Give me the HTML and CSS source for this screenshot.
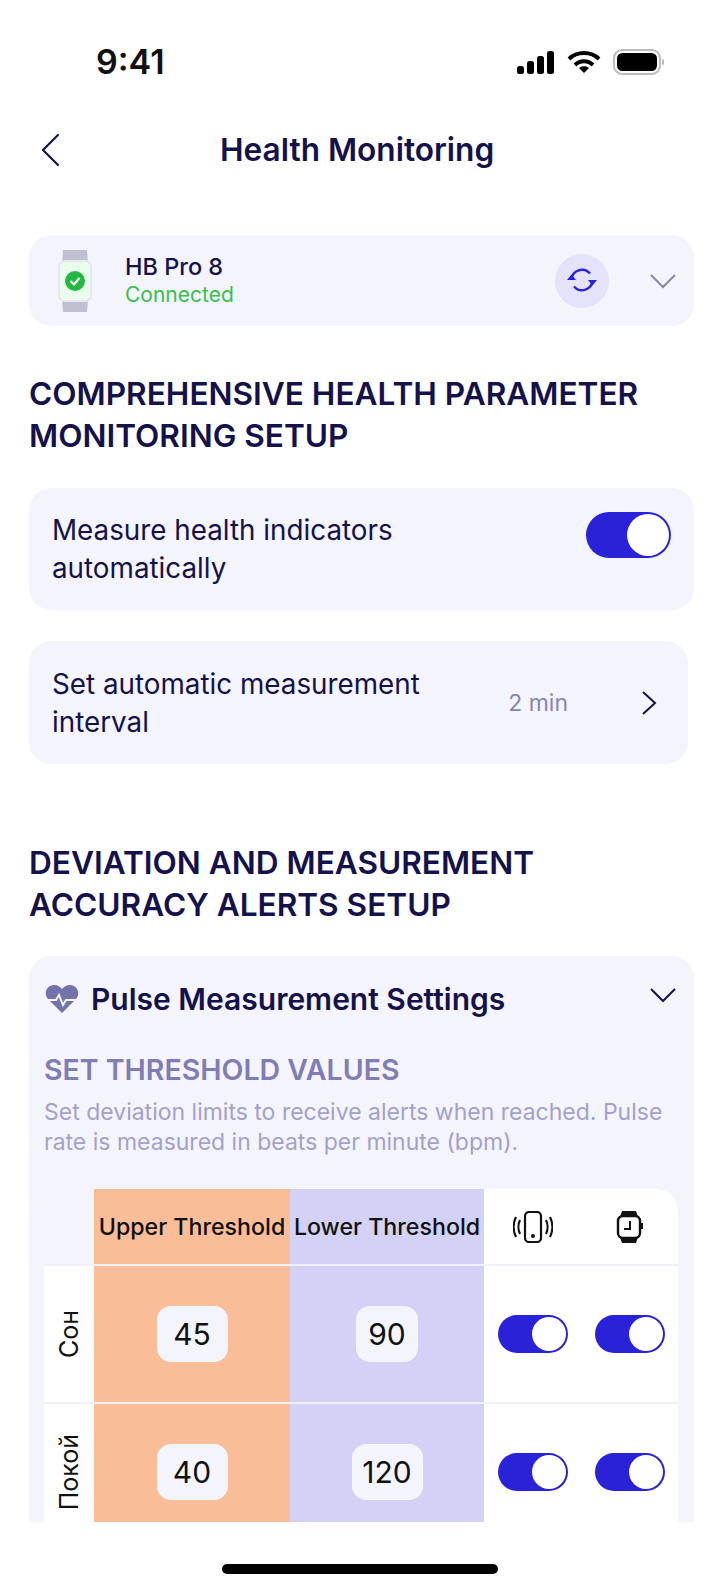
FILE: index.html
```html
<!DOCTYPE html>
<html lang="en">
<head>
<meta charset="UTF-8" />
<meta name="viewport" content="width=device-width, initial-scale=1" />
<title>Health Monitoring</title>
<link rel="stylesheet" href="styles.css">
</head>
<body>

<div class="status-bar">
  <span class="time">9:41</span>
  <div class="status-icons">
    <svg width="38" height="23" viewBox="0 0 38 23" fill="#000">
      <rect x="0" y="15" width="7" height="8" rx="2.5"/>
      <rect x="10" y="10" width="7" height="13" rx="2.5"/>
      <rect x="20" y="5" width="7" height="18" rx="2.5"/>
      <rect x="30" y="0" width="7" height="23" rx="2.5"/>
    </svg>
    <svg width="34" height="24" viewBox="0 0 34 24" fill="none" stroke="#000" stroke-width="4">
      <path d="M2 9 C10 1 24 1 32 9"/>
      <path d="M8 15 C13 10 21 10 26 15"/>
      <path d="M12 18 L17 23 L22 18 C19 15.500 15 15.500 12 18 Z" fill="#000" stroke="none"/>
    </svg>
    <svg width="52" height="26" viewBox="0 0 52 26">
      <rect x="1" y="1" width="46" height="24" rx="8" fill="none" stroke="#bdbdbd" stroke-width="2"/>
      <rect x="4" y="4" width="40" height="18" rx="5.500" fill="#000"/>
      <rect x="49" y="10" width="2" height="6" rx="1" fill="#bdbdbd"/>
    </svg>
  </div>
</div>

<div class="nav-bar">
  <svg class="back" width="20" height="34" viewBox="0 0 20 34" fill="none" stroke="#15124b" stroke-width="2.200" stroke-linecap="round" stroke-linejoin="round">
    <path d="M17 2 L2 17 L17 32"/>
  </svg>
  <h1>Health Monitoring</h1>
</div>

<div class="content">
  <div class="card device-card">
    <svg class="watch" width="34" height="62" viewBox="0 0 34 62">
      <path d="M5 0 H29 L30 14 H4 Z" fill="#c0c0d2"/>
      <path d="M4 48 H30 L29 62 H5 Z" fill="#c0c0d2"/>
      <rect x="1" y="11" width="32" height="40" rx="6" fill="#eafcec" stroke="#e6e6ee" stroke-width="2"/>
      <circle cx="17" cy="31" r="10" fill="#22b841"/>
      <path d="M12.500 31 L16 34.500 L21.500 28" fill="none" stroke="#fff" stroke-width="2.200"/>
    </svg>
    <div class="device-info">
      <div class="device-name">HB Pro 8</div>
      <div class="device-status">Connected</div>
    </div>
    <div class="sync-btn">
      <svg width="30" height="28" viewBox="0 0 30 28" fill="none" stroke="#2a22d8" stroke-width="2.400">
        <path d="M4.500 13 A10.500 10.500 0 0 1 23 6.500"/>
        <path d="M25.500 13 A10.500 10.500 0 0 1 7 19.500"/>
        <path d="M0 13 H9 L4.500 7.500 Z" fill="#2a22d8" stroke="none"/>
        <path d="M21 13 H30 L25.500 18.500 Z" fill="#2a22d8" stroke="none"/>
      </svg>
    </div>
    <svg class="chevron-down" width="28" height="16" viewBox="0 0 28 16" fill="none" stroke="#8886b0" stroke-width="2">
      <path d="M2 2 L14 14 L26 2"/>
    </svg>
  </div>

  <h2 class="section-title first">COMPREHENSIVE HEALTH PARAMETER MONITORING SETUP</h2>

  <div class="card setting-card">
    <div class="setting-label">Measure health indicators automatically</div>
    <div class="toggle big"><span></span></div>
  </div>

  <div class="card setting-card interval">
    <div class="setting-label">Set automatic measurement interval</div>
    <div class="setting-value">2 min</div>
    <svg width="16" height="26" viewBox="0 0 16 26" fill="none" stroke="#15124b" stroke-width="2">
      <path d="M2 2 L14 13 L2 24"/>
    </svg>
  </div>

  <h2 class="section-title second">DEVIATION AND MEASUREMENT ACCURACY ALERTS SETUP</h2>

  <div class="card pulse-card">
    <div class="pulse-head">
      <svg width="34" height="28" viewBox="0 0 34 28">
        <path d="M17 28 L3 14 C-2 8 2 0 9 0 C13 0 15 2 17 4 C19 2 21 0 25 0 C32 0 36 8 31 14 Z" fill="#7472ab"/>
        <path d="M0 15 H11 L14 10 L18 20 L21 15 H34" fill="none" stroke="#f4f4fc" stroke-width="2"/>
      </svg>
      <h3>Pulse Measurement Settings</h3>
      <svg class="chevron-pulse" width="28" height="16" viewBox="0 0 28 16" fill="none" stroke="#15124b" stroke-width="2">
        <path d="M2 2 L14 14 L26 2"/>
      </svg>
    </div>
    <div class="threshold-title">SET THRESHOLD VALUES</div>
    <p class="threshold-desc">Set deviation limits to receive alerts when reached. Pulse rate is measured in beats per minute (bpm).</p>

    <div class="threshold-table">
      <div class="row head-row">
        <div class="cell corner"></div>
        <div class="cell upper">Upper Threshold</div>
        <div class="cell lower">Lower Threshold</div>
        <div class="cell">
          <svg width="40" height="32" viewBox="0 0 40 32" fill="none" stroke="#111" stroke-width="2.200">
            <rect x="12" y="1" width="16" height="30" rx="4"/>
            <circle cx="20" cy="25" r="2" fill="#111" stroke="none"/>
            <path d="M7 9 C5 13 5 19 7 23"/>
            <path d="M3 6 C0 12 0 20 3 26"/>
            <path d="M33 9 C35 13 35 19 33 23"/>
            <path d="M37 6 C40 12 40 20 37 26"/>
          </svg>
        </div>
        <div class="cell">
          <svg width="28" height="32" viewBox="0 0 28 32" fill="none">
            <path d="M6 0 H20 L22 6 H4 Z" fill="#111"/>
            <path d="M4 26 H22 L20 32 H6 Z" fill="#111"/>
            <rect x="2" y="5" width="22" height="22" rx="5" stroke="#111" stroke-width="2.400" fill="#fff"/>
            <rect x="25" y="12" width="2" height="6" fill="#111"/>
            <path d="M14 10 V18 H8" stroke="#111" stroke-width="2"/>
          </svg>
        </div>
      </div>
      <div class="row">
        <div class="cell mode"><span>Сон</span></div>
        <div class="cell upper"><span class="value wide">45</span></div>
        <div class="cell lower"><span class="value">90</span></div>
        <div class="cell"><div class="toggle"><span></span></div></div>
        <div class="cell"><div class="toggle"><span></span></div></div>
      </div>
      <div class="row">
        <div class="cell mode"><span>Покой</span></div>
        <div class="cell upper"><span class="value wide">40</span></div>
        <div class="cell lower"><span class="value wide">120</span></div>
        <div class="cell"><div class="toggle"><span></span></div></div>
        <div class="cell"><div class="toggle"><span></span></div></div>
      </div>
    </div>
  </div>
</div>

<div class="home-area"><div class="home-bar"></div></div>

</body>
</html>
```
FILE: styles.css
```css
* {
  box-sizing: border-box;
}

html, body {
  margin: 0;
  padding: 0;
  height: 1588px;
  overflow: hidden;
}

body {
  background-color: #fff;
  color: #15124b;
  font-family: Inter, 'Noto Sans', sans-serif;
  display: flex;
  flex-direction: column;
}

.status-bar {
  height: 124px;
  padding: 44px 55px 0 96px;
  display: flex;
  justify-content: space-between;
  align-items: flex-start;
}

.time {
  font-size: 34px;
  font-weight: 600;
  line-height: 36px;
  color: #111;
}

.status-icons {
  display: flex;
  align-items: center;
  gap: 12px;
  height: 36px;
}

.nav-bar {
  height: 52px;
  padding-left: 41px;
  display: flex;
  align-items: center;
}

.nav-bar h1 {
  margin: 0 0 0 159px;
  font-size: 31.600px;
  font-weight: 600;
  line-height: 40px;
}

.content {
  height: 1346px;
  padding: 59px 26px 0 29px;
  overflow: hidden;
  flex: none;
}

.card {
  background-color: #f4f4fc;
  border-radius: 22px;
}

.device-card {
  height: 91px;
  display: flex;
  align-items: center;
  padding-left: 29px;
}

.device-info {
  margin-left: 33px;
  flex: 1;
}

.device-name {
  font-size: 23.500px;
  font-weight: 500;
  line-height: 28px;
}

.device-status {
  font-size: 21px;
  line-height: 27px;
  color: #35c24a;
}

.sync-btn {
  width: 54px;
  height: 54px;
  border-radius: 50%;
  background-color: #e4e3fb;
  display: flex;
  align-items: center;
  justify-content: center;
  margin-right: 40px;
}

.chevron-down {
  margin-right: 17px;
}

.section-title {
  margin: 0;
  font-size: 31.600px;
  font-weight: 600;
  line-height: 42px;
}

.section-title.first {
  margin-top: 47px;
  margin-bottom: 31px;
}

.section-title.second {
  margin-top: 78px;
  margin-bottom: 30px;
}

.setting-card {
  height: 122px;
  display: flex;
  align-items: center;
  padding: 0 23px;
}

.setting-label {
  flex: 1;
  font-size: 27.800px;
  line-height: 38px;
  max-width: 410px;
}

.setting-card .toggle {
  margin-left: auto;
  margin-top: -28px;
}

.interval {
  width: 659px;
  height: 123px;
  margin-top: 31px;
  padding-right: 31px;
}

.setting-value {
  margin-left: auto;
  font-size: 23px;
  color: #8886b0;
  margin-right: 73px;
}

.pulse-card {
  height: 620px;
  padding: 23px 16px 0 15px;
  border-radius: 22px 22px 0 0;
}

.pulse-head {
  display: flex;
  align-items: center;
  gap: 12px;
  height: 40px;
  padding-left: 1px;
  padding-right: 1px;
}

.pulse-head h3 {
  margin: 0;
  flex: 1;
  font-size: 30px;
  font-weight: 600;
}

.chevron-pulse {
  margin-top: -8px;
}

.threshold-title {
  margin-top: 36px;
  font-size: 28.500px;
  font-weight: 600;
  line-height: 30px;
  color: #7f7db4;
}

.threshold-desc {
  margin: 12px 0 0;
  font-size: 23px;
  line-height: 30px;
  color: #a3a1cb;
}

.threshold-table {
  margin-top: 32px;
  background-color: #fff;
  border-radius: 22px 22px 0 0;
  overflow: hidden;
}

.row {
  display: grid;
  grid-template-columns: 50px 196px 194px 97px 97px;
  height: 138px;
  border-top: 2px solid #f0f0f8;
}

.row.head-row {
  height: 75px;
  border-top: none;
}

.cell {
  display: flex;
  align-items: center;
  justify-content: center;
}

.corner {
  background-color: #f4f4fc;
}

.head-row .cell {
  font-size: 23.200px;
  font-weight: 500;
  color: #111;
  white-space: nowrap;
}

.upper {
  background-color: #f9bd98;
}

.lower {
  background-color: #d3d2f6;
}

.mode span {
  writing-mode: vertical-rl;
  transform: rotate(180deg);
  font-size: 25px;
  color: #111;
}

.value {
  width: 62px;
  height: 56px;
  background-color: #f4f4fc;
  border-radius: 14px;
  display: flex;
  align-items: center;
  justify-content: center;
  font-size: 30px;
  color: #111;
}

.value.wide {
  width: 71px;
}

.toggle {
  width: 70px;
  height: 38px;
  border-radius: 19px;
  background-color: #2a22d8;
  position: relative;
  flex: none;
}

.toggle span {
  position: absolute;
  top: 2px;
  right: 2px;
  width: 34px;
  height: 34px;
  border-radius: 50%;
  background-color: #fff;
}

.toggle.big {
  width: 85px;
  height: 46px;
  border-radius: 23px;
}

.toggle.big span {
  width: 42px;
  height: 42px;
}

.home-area {
  flex: 1;
  display: flex;
  justify-content: center;
  padding-top: 42px;
}

.home-bar {
  width: 276px;
  height: 10px;
  border-radius: 5px;
  background-color: #000;
}
```
